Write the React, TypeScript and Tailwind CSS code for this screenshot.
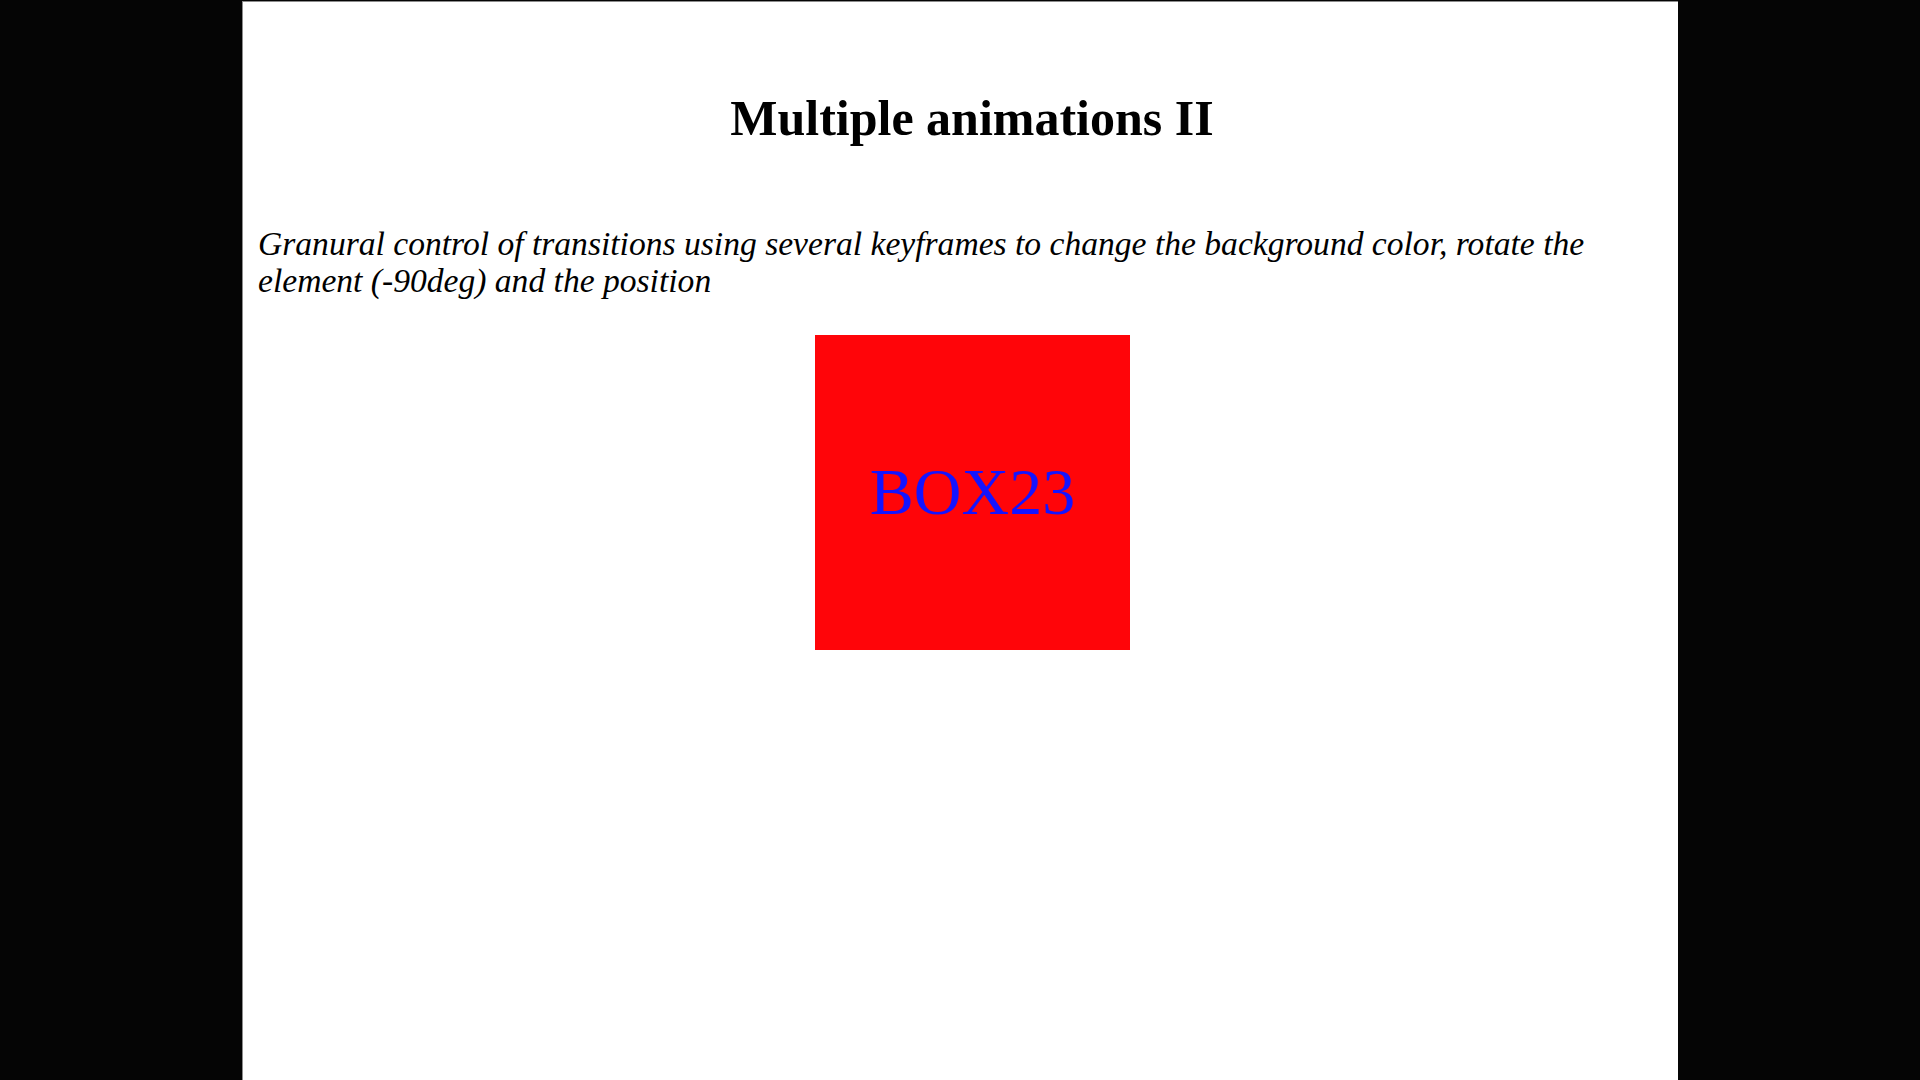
import React from 'react';

const App: React.FC = () => {
  return (
    <div className="min-h-screen w-full bg-[#050505] overflow-hidden">
      <div className="ml-[242px] mt-[1px] w-[1436px] h-[1079px] bg-white border-t border-l border-[#8c8c8c] font-['Liberation_Serif',serif] text-black">
        {/* Title */}
        <h1 className="pt-[88px] pl-[23px] text-center text-[50px] font-bold leading-[1.15]">
          Multiple animations II
        </h1>

        {/* Description */}
        <p className="mt-[77px] pl-[15px] pr-[40px] text-[33.6px] italic leading-[37px]">
          Granural control of transitions using several keyframes to change the background color, rotate the element (-90deg) and the position
        </p>

        {/* Animated box */}
        <div className="mt-[36px] ml-[572px] w-[315px] h-[315px] bg-[#ff0509] flex items-center justify-center">
          <span className="text-[66px] leading-none text-[#1414ff]">BOX23</span>
        </div>
      </div>
    </div>
  );
};

export default App;
